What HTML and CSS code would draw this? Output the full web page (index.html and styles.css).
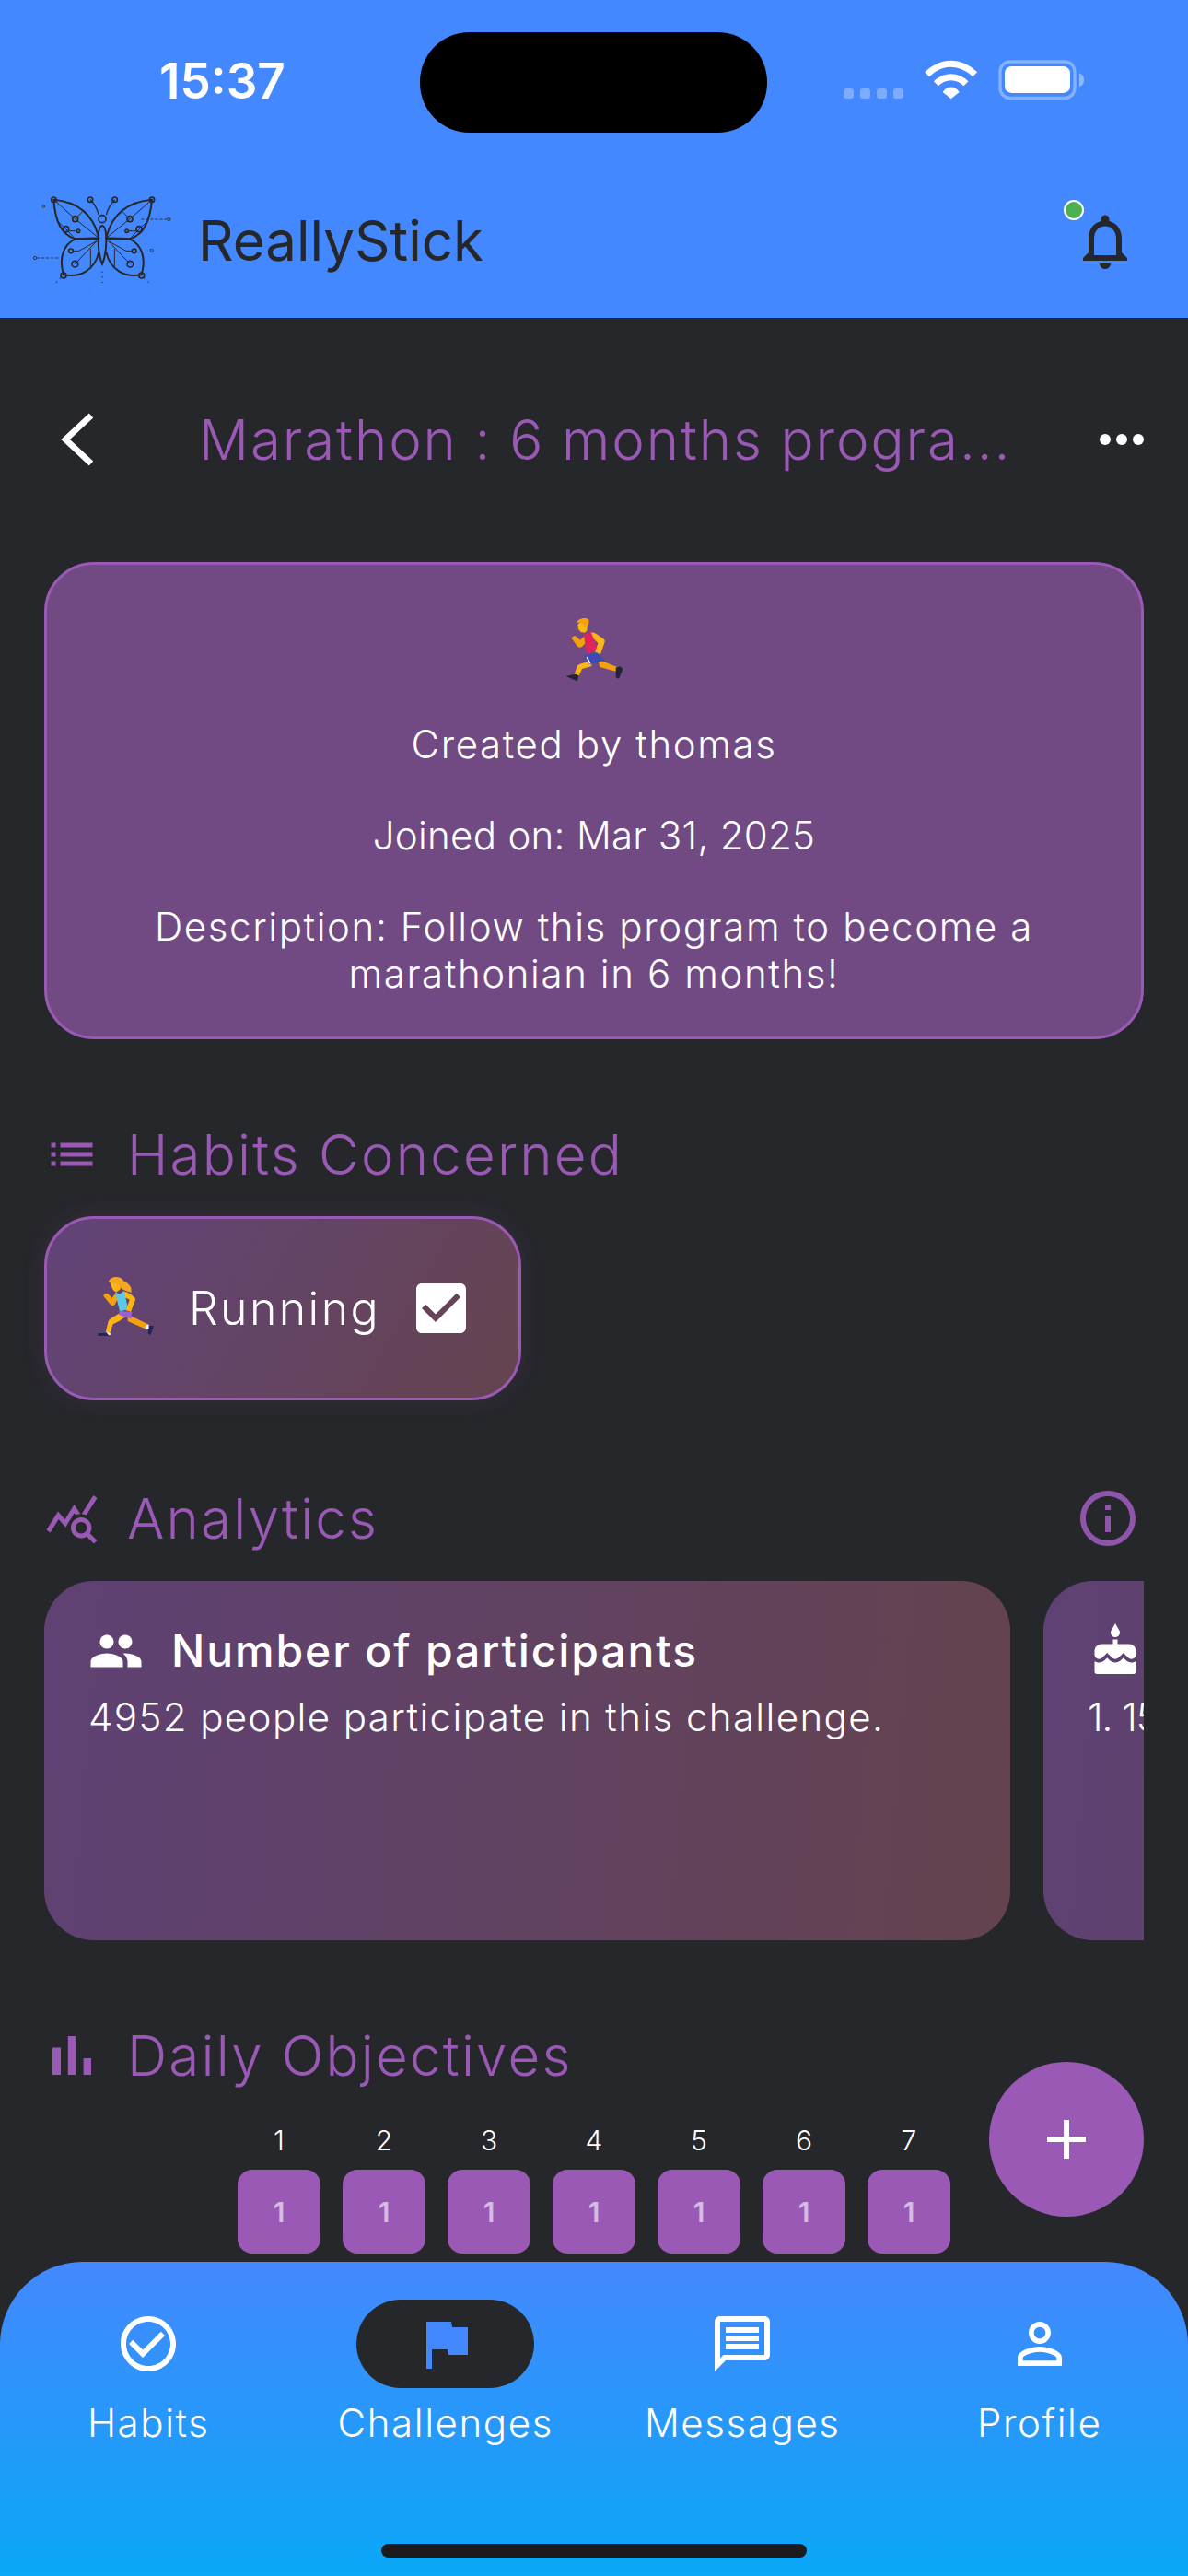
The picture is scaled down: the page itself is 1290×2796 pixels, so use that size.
FILE: index.html
```html
<!DOCTYPE html>
<html lang="en">
<head>
<meta charset="utf-8">
<title>ReallyStick</title>
<link rel="stylesheet" href="styles.css">
</head>
<body>
<div class="page">
  <header class="top">
    <div class="status">
      <span class="time">15:37</span>
      <span class="island"></span>
      <svg class="status-icons" viewBox="0 0 1020 180">
        <g fill="#fff" opacity=".3">
          <rect x="108" y="138" width="33" height="33" rx="9"/><rect x="162" y="138" width="33" height="33" rx="9"/><rect x="216" y="138" width="33" height="33" rx="9"/><rect x="270" y="138" width="33" height="33" rx="9"/>
        </g>
        <g fill="none" stroke="#fff" stroke-width="21">
          <path d="M380 92C428 46 488 46 536 92"/>
          <path d="M409 122C438 94 478 94 507 122"/>
        </g>
        <path fill="#fff" d="M431 150C446 128 470 128 485 150L458 172Z"/>
        <rect x="618" y="51" width="243" height="118" rx="32" fill="none" stroke="#fff" stroke-opacity=".35" stroke-width="10"/>
        <rect x="633" y="66" width="213" height="87" rx="22" fill="#fff"/>
        <path fill="#fff" fill-opacity=".4" d="M876 89C886 90 891 98 891 110S886 130 876 131Z"/>
      </svg>
    </div>
    <div class="appbar">
      <svg class="logo" viewBox="0 0 600 420">
        <g fill="none" stroke="#26272b" stroke-width="5">
          <path stroke-width="6" d="M115 80C170 85 240 110 262 205L185 208C145 195 120 160 115 80Z"/>
          <path stroke-width="6" d="M262 208H185C150 225 130 265 147 325C200 335 250 310 262 250"/>
          <path stroke-width="3" d="M115 80L185 143M213 115L185 143L262 205M155 176L125 148M155 176L185 208M165 182H190M178 247H197L255 215M184 290L255 215M235 240V300"/>
          <path stroke-width="4" d="M262 130C255 105 245 90 234 80"/>
          <circle cx="115" cy="80" r="8"/><circle cx="185" cy="143" r="9"/><circle cx="155" cy="176" r="9"/><circle cx="195" cy="182" r="5"/><circle cx="171" cy="247" r="7"/><circle cx="184" cy="290" r="10"/><circle cx="147" cy="327" r="9"/><circle cx="234" cy="80" r="8"/>
        </g>
        <g fill="none" stroke="#26272b" stroke-width="5" transform="matrix(-1 0 0 1 548 0)">
          <path stroke-width="6" d="M113 80C170 85 240 110 262 205L185 208C145 195 120 160 113 80Z"/>
          <path stroke-width="6" d="M262 208H185C150 225 130 265 147 325C200 335 250 310 262 250"/>
          <path stroke-width="3" d="M113 80L185 143M213 115L185 143L262 205M155 176L125 148M155 176L185 208M165 182H190M178 247H197L255 215M184 290L255 215M235 240V300"/>
          <path stroke-width="4" d="M262 130C255 105 245 90 234 80"/>
          <circle cx="113" cy="80" r="8"/><circle cx="185" cy="143" r="9"/><circle cx="155" cy="176" r="9"/><circle cx="195" cy="182" r="5"/><circle cx="171" cy="247" r="7"/><circle cx="184" cy="290" r="10"/><circle cx="147" cy="327" r="9"/><circle cx="234" cy="80" r="8"/>
        </g>
        <path fill="none" stroke="#26272b" stroke-width="6" d="M273 165C262 165 260 190 260 215C260 250 268 280 273 290C278 280 286 250 286 215C286 190 284 165 273 165Z"/>
        <circle cx="273" cy="143" r="12" fill="none" stroke="#26272b" stroke-width="5"/>
        <g fill="none" stroke="#26272b" stroke-width="2.5">
          <path stroke-dasharray="10 5" d="M60 270H135M400 144H484"/>
          <circle cx="54" cy="270" r="5"/><circle cx="490" cy="144" r="5"/><circle cx="82" cy="102" r="4"/><circle cx="434" cy="246" r="5"/>
          <path stroke-dasharray="3 14" stroke-width="4" d="M273 314V362M137 335L118 355M410 335L430 355"/>
        </g>
      </svg>
      <span class="brand">ReallyStick</span>
      <span class="bell-wrap">
        <svg class="icon-72 bell" viewBox="0 0 24 24"><path d="M12 22c1.100 0 2-.9 2-2h-4c0 1.100.9 2 2 2zm6-6v-5c0-3.070-1.630-5.640-4.500-6.320V4c0-.83-.67-1.500-1.500-1.500s-1.500.67-1.500 1.500v.68C7.640 5.360 6 7.920 6 11v5l-2 2v1h16v-1l-2-2zm-2 1H8v-6c0-2.480 1.510-4.500 4-4.500s4 2.020 4 4.500v6z"/></svg>
        <span class="dot"></span>
      </span>
    </div>
  </header>

  <main class="main">
    <div class="title-row">
      <svg class="back" viewBox="0 0 40 60"><path d="M35 4L7 30L35 56" fill="none" stroke="#fff" stroke-width="6.500"/></svg>
      <h1 class="title">Marathon : 6 months progra...</h1>
      <svg class="more" viewBox="0 0 48 12"><circle cx="6" cy="6" r="6"/><circle cx="24" cy="6" r="6"/><circle cx="42" cy="6" r="6"/></svg>
    </div>

    <section class="info-card">
      <svg class="runner-man" viewBox="0 0 360 300">
        <path fill="#f5a10d" d="M122 128C124 120 134 118 138 124L150 134L172 114L182 128L156 156C150 160 144 158 140 154Z"/>
        <path fill="#fbb515" d="M156 210L192 200L186 220L156 228L146 250L130 248L140 220C142 214 150 212 156 210Z"/>
        <path fill="#f5a10d" d="M208 198L226 204L270 222L266 236L214 222Z"/>
        <path fill="#e0245e" d="M162 116L188 105L205 166L172 180C168 160 164 136 162 116Z"/>
        <path fill="#fbb515" d="M186 110C194 108 200 112 206 116L228 132C232 136 230 142 228 146L216 180L198 176L208 144L194 130Z"/>
        <path fill="#3a4bb8" d="M162 186L204 174L230 200L180 214Z"/>
        <path fill="#fff" d="M170 190L174 188L184 210L180 212Z"/>
        <path fill="#fbb515" d="M142 84C148 74 168 72 174 84L172 104L164 110L152 108L144 98Z"/>
        <path fill="#f5a10d" d="M137 78C144 64 170 58 178 68C180 78 176 88 172 94L164 92L160 82C152 78 144 76 137 78Z"/>
        <path fill="#1f2436" d="M103 252L135 245L145 250L140 268ZM266 224L280 220L289 228L276 260L266 256Z"/>
      </svg>
      <p class="info-line">Created by thomas</p>
      <p class="info-line date-line">Joined on: Mar 31, 2025</p>
      <p class="info-line">Description: Follow this program to become a marathonian in 6 months!</p>
    </section>

    <div class="section-head head-habits">
      <svg class="icon-60" viewBox="0 0 24 24"><path d="M3 13h2v-2H3v2zm0 4h2v-2H3v2zm0-8h2V7H3v2zm4 4h14v-2H7v2zm0 4h14v-2H7v2zM7 7v2h14V7H7z"/></svg>
      <h2 class="section-title">Habits Concerned</h2>
    </div>

    <div class="chip">
      <svg class="runner-woman" viewBox="0 0 300 285">
        <path fill="#f5a10d" d="M97 140C98 132 108 128 113 134L125 146L138 128L150 136L134 168C130 172 124 172 120 168Z"/>
        <path fill="#fbb515" d="M150 196L170 206L148 222L128 232L118 262L104 258L112 226C114 216 122 212 130 208Z"/>
        <path fill="#f5a10d" d="M176 206L192 208L242 232L236 248L176 222Z"/>
        <path fill="#5bc8e8" d="M135 128L150 134L164 122L178 184L150 190Z"/>
        <path fill="#fbb515" d="M165 126C172 126 180 130 186 134L200 146C202 152 200 156 198 160L186 192L170 186L182 152L166 144Z"/>
        <path fill="#9b5fd0" d="M148 188L190 192L188 214L160 206L148 200Z"/>
        <path fill="#fbb515" d="M118 96L152 94L152 118L138 128L128 120Z"/>
        <path fill="#f5a623" d="M113 96C116 76 150 70 164 92C178 98 190 108 188 128C172 124 158 122 150 108L140 100C130 98 120 96 113 96Z"/>
        <path fill="#fff" d="M108 258L120 262L118 268L106 266ZM234 238L244 232L246 246L236 250Z"/>
        <path fill="#1b2560" d="M78 262L108 260L116 269L80 270ZM246 236L261 238L250 268L242 262Z"/>
      </svg>
      <span class="chip-label">Running</span>
      <svg class="icon-72 chip-check" viewBox="0 0 24 24"><path d="M19 3H5c-1.110 0-2 .9-2 2v14c0 1.100.89 2 2 2h14c1.110 0 2-.9 2-2V5c0-1.100-.89-2-2-2zm-9 14l-5-5 1.410-1.410L10 14.170l7.590-7.590L19 8l-9 9z"/></svg>
    </div>

    <div class="section-head head-analytics">
      <svg class="icon-60" viewBox="0 0 24 24"><path d="M19.880 18.470c.44-.7.7-1.510.7-2.390 0-2.490-2.010-4.500-4.500-4.500s-4.500 2.010-4.500 4.500 2.010 4.500 4.490 4.500c.88 0 1.700-.26 2.390-.7L21.580 23 23 21.580l-3.120-3.110zm-3.800.11c-1.380 0-2.500-1.120-2.500-2.500s1.120-2.500 2.500-2.500 2.500 1.120 2.500 2.500-1.120 2.500-2.500 2.500zm-.36-8.500c-.74.02-1.450.18-2.100.45l-.55-.83-3.800 6.180-3.010-3.520-3.630 5.810L1 17l5-8 3 3.500L13 6l2.720 4.080zm2.590.5c-.64-.28-1.330-.45-2.050-.49L21.380 2 23 3.180l-4.690 7.400z"/></svg>
      <h2 class="section-title">Analytics</h2>
      <svg class="icon-72 info" viewBox="0 0 24 24"><path d="M11 7h2v2h-2zm0 4h2v6h-2zm1-9C6.480 2 2 6.480 2 12s4.480 10 10 10 10-4.480 10-10S17.520 2 12 2zm0 18c-4.410 0-8-3.590-8-8s3.590-8 8-8 8 3.590 8 8-3.590 8-8 8z"/></svg>
    </div>

    <div class="stats-scroll">
      <article class="stat-card">
        <div class="stat-head">
          <svg class="icon-60 white" viewBox="0 0 24 24"><path d="M16 11c1.660 0 2.990-1.340 2.990-3S17.660 5 16 5c-1.660 0-3 1.340-3 3s1.340 3 3 3zm-8 0c1.660 0 2.990-1.340 2.990-3S9.660 5 8 5C6.340 5 5 6.340 5 8s1.340 3 3 3zm0 2c-2.330 0-7 1.170-7 3.500V19h14v-2.500c0-2.330-4.670-3.500-7-3.500zm8 0c-.29 0-.62.02-.97.05 1.160.84 1.970 1.970 1.970 3.450V19h6v-2.500c0-2.330-4.670-3.500-7-3.500z"/></svg>
          <h3 class="stat-title">Number of participants</h3>
        </div>
        <p class="stat-body">4952 people participate in this challenge.</p>
      </article>
      <article class="stat-card">
        <div class="stat-head">
          <svg class="icon-60 white" viewBox="0 0 24 24"><path d="M12 6c1.110 0 2-.9 2-2 0-.38-.1-.73-.29-1.030L12 0l-1.710 2.970c-.19.3-.29.65-.29 1.030 0 1.100.9 2 2 2zm4.600 9.990l-1.070-1.070-1.080 1.070c-1.300 1.300-3.580 1.310-4.890 0l-1.070-1.070-1.090 1.070C6.750 16.640 5.880 17 4.960 17c-.73 0-1.400-.23-1.960-.61V21c0 .55.45 1 1 1h16c.55 0 1-.45 1-1v-4.610c-.56.38-1.230.61-1.960.61-.92 0-1.790-.36-2.440-1.010zM18 9h-5V7h-2v2H6c-1.660 0-3 1.340-3 3v1.540c0 1.080.88 1.960 1.960 1.960.52 0 1.020-.2 1.380-.57l2.140-2.130 2.130 2.130c.74.74 2.030.74 2.770 0l2.140-2.130 2.130 2.130c.37.37.86.57 1.380.57 1.080 0 1.960-.88 1.960-1.960V12C21 10.340 19.660 9 18 9z"/></svg>
        </div>
        <p class="stat-body stat-body-tight">1. 15</p>
      </article>
    </div>

    <div class="section-head head-daily">
      <svg class="icon-60 icon-bars" viewBox="0 0 24 24"><path d="M5 9.200h3V19H5zM10.600 5h2.800v14h-2.800zm5.600 8H19v6h-2.800z"/></svg>
      <h2 class="section-title">Daily Objectives</h2>
    </div>

    <div class="days">
      <span class="day-num">1</span><span class="day-num">2</span><span class="day-num">3</span><span class="day-num">4</span><span class="day-num">5</span><span class="day-num">6</span><span class="day-num">7</span>
      <span class="day-box">1</span><span class="day-box">1</span><span class="day-box">1</span><span class="day-box">1</span><span class="day-box">1</span><span class="day-box">1</span><span class="day-box">1</span>
    </div>

    <button class="fab" type="button"><svg class="icon-72 white" viewBox="0 0 24 24"><path d="M19 13h-6v6h-2v-6H5v-2h6V5h2v6h6v2z"/></svg></button>
  </main>

  <nav class="nav">
    <div class="nav-item">
      <span class="nav-icon"><svg class="icon-72 white" viewBox="0 0 24 24"><path d="M16.590 7.580L10 14.170l-3.590-3.580L5 12l5 5 8-8zM12 2C6.480 2 2 6.480 2 12s4.480 10 10 10 10-4.480 10-10S17.520 2 12 2zm0 18c-4.420 0-8-3.580-8-8s3.580-8 8-8 8 3.580 8 8-3.580 8-8 8z"/></svg></span>
      <span class="nav-label">Habits</span>
    </div>
    <div class="nav-item">
      <span class="nav-icon active"><svg class="icon-72 blue" viewBox="0 0 24 24"><path d="M14.400 6L14 4H5v17h2v-7h5.600l.4 2h7V6z"/></svg></span>
      <span class="nav-label">Challenges</span>
    </div>
    <div class="nav-item">
      <span class="nav-icon"><svg class="icon-72 white" viewBox="0 0 24 24"><path d="M20 2H4c-1.100 0-2 .9-2 2v18l4-4h14c1.100 0 2-.9 2-2V4c0-1.100-.9-2-2-2zm0 14H5.170L4 17.170V4h16v12zM6 12h12v2H6zm0-3h12v2H6zm0-3h12v2H6z"/></svg></span>
      <span class="nav-label">Messages</span>
    </div>
    <div class="nav-item">
      <span class="nav-icon"><svg class="icon-72 white" viewBox="0 0 24 24"><path d="M12 5.900c1.160 0 2.100.94 2.100 2.100s-.94 2.100-2.100 2.100S9.900 9.160 9.900 8s.94-2.100 2.100-2.100m0 9c2.970 0 6.100 1.460 6.100 2.100v1.100H5.900V17c0-.64 3.130-2.100 6.100-2.100M12 4C9.790 4 8 5.790 8 8s1.790 4 4 4 4-1.790 4-4-1.790-4-4-4zm0 9c-2.670 0-8 1.340-8 4v3h16v-3c0-2.660-5.330-4-8-4z"/></svg></span>
      <span class="nav-label">Profile</span>
    </div>
    <span class="home-bar"></span>
  </nav>
</div>
</body>
</html>
```
FILE: styles.css
```css
* { box-sizing: border-box; }
html, body { margin: 0; padding: 0; }
body { background: #26272b; font-family: "Inter", "Liberation Sans", sans-serif; font-weight: 300; color: #fff; }
h1, h2, h3, p { margin: 0; font-weight: inherit; }
svg { display: block; flex: none; }

.page { position: relative; width: 1290px; height: 2796px; display: flex; flex-direction: column; overflow: hidden; }

.top { background: #4488ff; height: 345px; flex: none; }
.status { display: flex; height: 190px; align-items: flex-start; }
.time { width: 283px; margin-left: 173px; margin-top: 55px; font-size: 53px; line-height: 66px; font-weight: 600; color: #fff; }
.island { width: 377px; height: 109px; margin-top: 35px; border-radius: 54px; background: #000; }
.status-icons { width: 340px; height: 60px; margin-top: 50px; margin-left: 47px; }

.appbar { display: flex; align-items: center; height: 155px; padding-left: 20px; position: relative; }
.logo { width: 200px; height: 140px; align-self: flex-start; }
.brand { margin-left: -5px; margin-bottom: 14px; font-size: 60px; line-height: 72px; font-weight: 400; color: #26272b; }
.bell-wrap { position: relative; margin-left: auto; margin-right: 54px; margin-top: -12px; }
.bell { fill: #26272b; }
.dot { position: absolute; left: -9px; top: -9px; width: 22px; height: 22px; border-radius: 50%; background: #4caf50; border: 2px solid #fff; }

.icon-60 { width: 60px; height: 60px; fill: #9b59b6; }
.icon-bars { width: 72px; height: 72px; margin: 0 -6px; }
.icon-72 { width: 72px; height: 72px; }
.white { fill: #fff; }
.blue { fill: #4488ff; }

.main { flex: 1; padding: 82px 48px 0; min-height: 0; position: relative; overflow: hidden; }

.title-row { display: flex; align-items: center; height: 100px; position: relative; }
.back { width: 40px; height: 60px; margin-left: 16px; }
.title { margin-left: 112px; font-size: 60px; line-height: 72px; letter-spacing: 1.9px; color: #9b59b6; white-space: nowrap; }
.more { width: 48px; height: 12px; margin-left: auto; fill: #fff; }

.info-card { margin-top: 83px; height: 518px; padding: 37px 96px 0; border: 3px solid #9b59b6; border-radius: 54px; background: #714a83; text-align: center; }
.runner-man { width: 120px; height: 100px; margin: 0 auto 32px; transform: translateX(-5px); }
.info-line { font-size: 42px; line-height: 51px; margin-bottom: 48px; letter-spacing: 1.6px; }
.date-line { letter-spacing: .3px; }

.section-head { display: flex; align-items: center; height: 80px; gap: 30px; }
.section-title { font-size: 60px; line-height: 72px; letter-spacing: 2.2px; color: #9b59b6; }
.head-habits { margin-top: 85px; }
.head-analytics { margin-top: 88px; }
.head-daily { margin-top: 85px; }
.info { margin-left: auto; fill: #8f55ab; margin-right: 3px; }

.chip { margin-top: 27px; width: 518px; height: 200px; padding-left: 29px; display: flex; align-items: center; border: 3px solid #9b59b6; border-radius: 54px; background: linear-gradient(120deg, #624379, #65444f); box-shadow: 0 0 24px rgba(155, 89, 182, .12); }
.runner-woman { width: 100px; height: 95px; margin-bottom: 25px; }
.chip-label { margin-left: 25px; font-size: 50px; line-height: 60px; letter-spacing: 2.4px; }
.chip-check { fill: #fff; margin-left: 30px; }

.stats-scroll { margin-top: 28px; display: flex; gap: 36px; height: 390px; overflow: hidden; }
.stat-card { flex: none; width: 1049px; height: 390px; padding: 40px 48px; border-radius: 54px; background: linear-gradient(95deg, #5f4174, #64434f); }
.stat-head { display: flex; align-items: center; height: 72px; gap: 30px; }
.stat-title { font-size: 48px; line-height: 60px; font-weight: 500; letter-spacing: 1.9px; white-space: nowrap; }
.stat-body { margin-top: 9px; font-size: 42px; line-height: 54px; letter-spacing: 1.4px; white-space: nowrap; }
.stat-body-tight { letter-spacing: -1px; }

.days { margin: 32px 0 0 210px; display: grid; grid-template-columns: repeat(7, 90px); column-gap: 24px; justify-content: start; }
.day-num { text-align: center; font-size: 30px; line-height: 40px; }
.day-box { margin-top: 12px; height: 91px; display: flex; align-items: center; justify-content: center; border-radius: 16px; background: #9b59b6; font-size: 30px; font-weight: 600; color: rgba(255, 255, 255, .6); }

.fab { position: absolute; left: 1074px; top: 1893px; width: 168px; height: 168px; padding: 48px; border: 0; border-radius: 50%; background: #9b59b6; }

.nav { position: relative; flex: none; height: 341px; border-radius: 90px 90px 0 0; background: linear-gradient(180deg, #4488ff, #0aa8f7); display: grid; grid-template-columns: repeat(4, 1fr); align-content: start; padding-top: 41px; }
.nav-item { display: flex; flex-direction: column; align-items: center; }
.nav-icon { width: 193px; height: 96px; display: flex; align-items: center; justify-content: center; border-radius: 48px; }
.active { background: #26272b; }
.nav-label { margin-top: 13px; font-size: 42px; line-height: 50px; letter-spacing: 1.6px; white-space: nowrap; }
.home-bar { position: absolute; left: 414px; bottom: 20px; width: 462px; height: 15px; border-radius: 8px; background: #1c1c1e; }
```
